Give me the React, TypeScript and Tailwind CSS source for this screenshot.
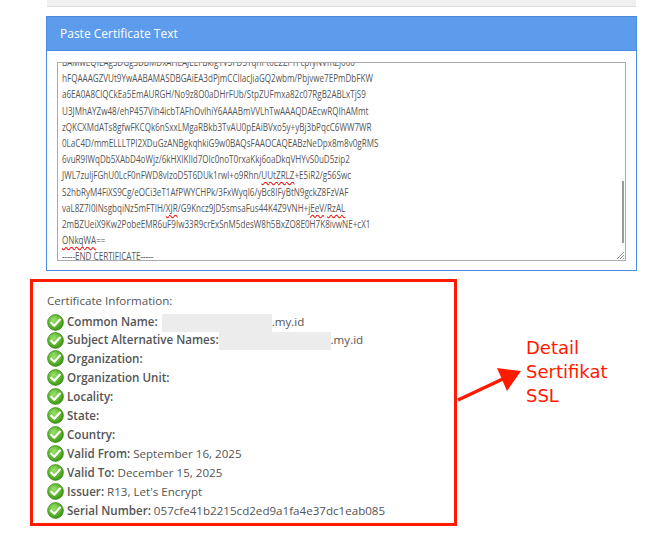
import React from "react";

const lines: React.ReactNode[] = [
  "BAMwEQIEAgSDGgSDBMDxAHEAJEEFBkIgTV3FD5YqnPt0E2ZFTFcpfyNVmZj000",
  "hFQAAAGZVUt9YwAABAMASDBGAiEA3dPjmCCIlacJiaGQ2wbm/Pbjvwe7EPmDbFKW",
  "a6EA0A8ClQCkEa5EmAURGH/No9z8O0aDHrFUb/StpZUFmxa82c07RgB2ABLxTjS9",
  "U3JMhAYZw48/ehP457Vih4icbTAFhOvlhiY6AAABmVVLhTwAAAQDAEcwRQIhAMmt",
  "zQKCXMdATs8gfwFKCQk6nSxxLMgaRBkb3TvAU0pEAiBVxo5y+yBj3bPqcC6WW7WR",
  "0LaC4D/mmELLLTPI2XDuGzANBgkqhkiG9w0BAQsFAAOCAQEABzNeDpx8m8v0gRMS",
  "6vuR9IWqDb5XAbD4oWjz/6kHXIKIld7OIc0noT0rxaKkj6oaDkqVHYvS0uD5zip2",
  <>JWL7zuljFGhU0LcF0nFWD8vlzoD5T6DUk1rwl+o9Rhn/<W>UUtZRLZ</W>+E5iR2/g56Swc</>,
  "S2hbRyM4FiXS9Cg/eOCi3eT1AfPWYCHPk/3FxWyql6/yBc8IFyBtN9gckZ8FzVAF",
  <>vaL8Z7I0INsgbqiNz5mFTIH/<W>XJR</W>/G9Kncz9JD5smsaFus44K4Z9VNH+<W>jEeV</W>/<W>RzAL</W></>,
  "2mBZUeiX9Kw2PobeEMR6uF9Iw33R9crExSnM5desW8h5BxZO8E0H7K8ivwNE+cX1",
  <><W>ONkqWA</W>==</>,
  "-----END CERTIFICATE-----",
];

function W({ children }: { children: React.ReactNode }) {
  return <span className="underline decoration-wavy decoration-[#e00] underline-offset-2">{children}</span>;
}

function Check() {
  return (
    <svg width="17" height="17" viewBox="0 0 20 20" className="shrink-0">
      <defs>
        <radialGradient id="g" cx="40%" cy="35%" r="65%">
          <stop offset="0%" stopColor="#9be36a" />
          <stop offset="100%" stopColor="#3d9a12" />
        </radialGradient>
      </defs>
      <circle cx="10" cy="10" r="9.3" fill="url(#g)" stroke="#2f7d0c" strokeWidth="0.8" />
      <path d="M5 10.2 L8.6 13.8 L15.2 6.6" fill="none" stroke="#fff" strokeWidth="2.6" strokeLinecap="round" strokeLinejoin="round" />
    </svg>
  );
}

function Blur({ w }: { w: number }) {
  return <span className="inline-block h-[18px] bg-[#ececec] align-middle" style={{ width: w }} />;
}

const rows: [string, React.ReactNode, string?][] = [
  ["Common Name:", <><span className="ml-1" /><Blur w={110} />.my.id</>, "h-[19px]"],
  ["Subject Alternative Names:", <><Blur w={112} />.my.id</>, "h-[17px]"],
  ["Organization:", null, "h-[19px]"],
  ["Organization Unit:", null],
  ["Locality:", null],
  ["State:", null],
  ["Country:", null],
  ["Valid From:", " September 16, 2025"],
  ["Valid To:", " December 15, 2025"],
  ["Issuer:", " R13, Let's Encrypt"],
  ["Serial Number:", " 057cfe41b2215cd2ed9a1fa4e37dc1eab085"],
];

export default function App() {
  return (
    <div className="w-[654px] h-[540px] bg-white relative overflow-hidden" style={{ fontFamily: '"Open Sans", sans-serif' }}>
      <div className="ml-[47px] w-[589px] h-[7px] bg-[#f0f0f0] border-b border-[#ddd]" />
      <div className="ml-[46px] mt-[9px] w-[591px] border border-[#4a8de0]">
        <div className="h-[33px] bg-[#5d9cec] text-white text-[12px] flex items-center pl-[13px]">Paste Certificate Text</div>
        <div className="bg-white border-t border-[#4a8de0] px-[10px] pt-[11px] pb-[9px]">
          <div className="relative h-[199px] border border-[#aaa] overflow-hidden text-[10.5px] text-[#555] leading-[16.2px] pl-[4px]">
            <div className="-mt-[9px] scale-x-[0.77] origin-left">
              {lines.map((l, i) => (
                <div key={i} className="whitespace-nowrap">{l}</div>
              ))}
            </div>
            <div className="absolute right-[1px] top-[118px] w-[2px] h-[62px] bg-[#999]" />
            <svg className="absolute right-0 bottom-0" width="10" height="10">
              <path d="M9 2 L2 9 M9 5 L5 9 M9 8 L8 9" stroke="#888" strokeWidth="1" />
            </svg>
          </div>
        </div>
      </div>
      <div className="ml-[30px] mt-[8px] w-[427px] h-[247px] border-[3px] border-[#ff1a00] px-[14px] pt-[10px] text-[11.6px] text-[#555]">
        <div className="mb-[4px]">Certificate Information:</div>
        {rows.map(([label, val, h], i) => (
          <div key={i} className={`flex items-center gap-[3px] ${h ?? "h-[19px]"} whitespace-nowrap`}>
            <Check />
            <span><span className="font-semibold">{label}</span>{val}</span>
          </div>
        ))}
      </div>
      <svg className="absolute left-0 top-0" width="654" height="540">
        <line x1="458" y1="400" x2="505" y2="378" stroke="#ff1a00" strokeWidth="3.5" />
        <polygon points="521,371 497,368 507,391" fill="#ff1a00" />
      </svg>
      <div className="absolute left-[526px] top-[336px] text-[#ff1a00] text-[18px] leading-[24px]" style={{ fontFamily: '"DejaVu Sans", sans-serif' }}>
        Detail<br />Sertifikat<br />SSL
      </div>
    </div>
  );
}
